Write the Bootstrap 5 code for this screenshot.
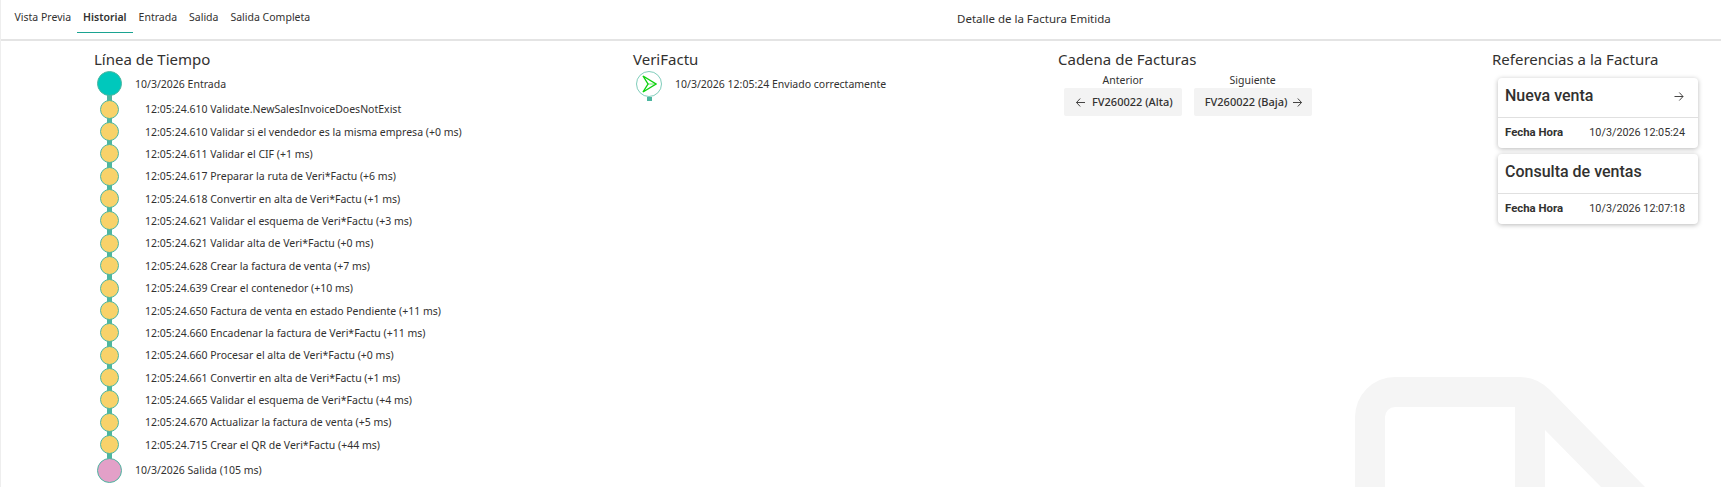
<!DOCTYPE html>
<html lang="es">
<head>
<meta charset="utf-8">
<title>Detalle de la Factura Emitida</title>
<link href="https://cdn.jsdelivr.net/npm/bootstrap@5.3.0/dist/css/bootstrap.min.css" rel="stylesheet">
<style>
html,body{height:100%;}
body{font-family:"Noto Sans","Open Sans",sans-serif;font-size:10.5px;color:#323130;background:#fff;overflow:hidden;position:relative;border-left:1px solid #eee;}
.wmark{position:absolute;left:-1px;top:0;width:1721px;height:487px;z-index:0;}
.topbar{height:41px;border-bottom:2px solid #e4e4e4;position:relative;z-index:1;}
.tabset{width:1034px;padding-left:7.5px;}
.tabitem{height:33px;padding:3px 6px 0;color:#323130;text-decoration:none;display:flex;align-items:center;}
.tabitem.on{font-weight:600;border-bottom:1px solid #1aa391;}
.toptitle{margin-left:-78px;font-size:11.5px;height:37px;}
.mainrow{position:relative;z-index:1;padding-top:8px;}
.cola{width:632px;padding-left:93px;}
.colb{width:425px;}
.colc{width:434px;}
.cold{width:229px;}
.sect{font-size:15px;line-height:20px;font-weight:400;margin:0;color:#323130;}
.tlrow{position:relative;height:22.37px;}
.tlrow::before{content:"";position:absolute;left:13px;top:-6px;width:5px;height:34px;background:#4db6a0;z-index:0;}
.dot{position:relative;z-index:1;width:19px;height:19px;border-radius:50%;background:#f8d26a;border:1px solid #4db6a0;margin-left:6px;flex:none;}
.tltext{margin-left:26px;padding-top:2px;white-space:nowrap;}
.tlbig{height:29px;}
.tlbig::before{display:none;}
.tlend::before{display:block;top:-6px;height:12px;}
.dotbig{position:relative;z-index:1;width:25px;height:25px;border-radius:50%;background:#00c8bc;border:1px solid #4db6a0;margin-left:3px;flex:none;}
.dotend{background:#e3a0c8;}
.tlbig .tltext{margin-left:13px;}
.sendrow{height:26px;margin-top:2px;}
.sendicon{position:relative;width:26px;height:26px;border-radius:50%;border:1px solid #7fcdbb;flex:none;display:flex;align-items:center;justify-content:center;margin-left:3px;}
.sendicon::after{content:"";position:absolute;left:10px;top:25px;width:5px;height:4px;background:#4db6a0;}
.sendtext{margin-left:13px;padding-top:2px;}
.chain{margin-left:6px;margin-top:4px;gap:12px;}
.chainlabel{line-height:15px;}
.chainbtn{height:28px;background:#f3f3f3;border:0;border-radius:2px;font-size:11px;font-weight:500;color:#323130;display:flex;align-items:center;white-space:nowrap;}
.chainprev{padding:0 9px 0 12px;gap:7px;}
.chainnext{padding:0 10px 0 11px;gap:5px;}
.refcard{width:200px;margin-left:6px;border:0;border-radius:4px;box-shadow:0 1px 5px rgba(0,0,0,.28);margin-bottom:6px;font-family:Roboto,sans-serif;}
.refhead{height:40px;border-bottom:1px solid #e0e0e0;padding:9px 7px 0;display:flex;justify-content:space-between;align-items:flex-start;}
.refname{font-size:16px;font-weight:500;line-height:18px;color:#323130;}
.refarrow{margin:5px 7px 0 0;}
.refbody{height:30px;padding:0 13px 0 7px;display:flex;justify-content:space-between;align-items:center;font-size:10.8px;}
.refbody b{font-weight:700;font-size:11.4px;}
.sectgap{margin-bottom:9px;}
</style>
</head>
<body>
<svg class="wmark" viewBox="0 0 1721 487" aria-hidden="true"><path fill="#f5f5f5" d="M1355 487V417a40 40 0 0 1 40-40H1520q17 0 30 13L1645 487H1601L1545 430V487H1515V407H1395a10 10 0 0 0-10 10V487Z"/></svg>
<header class="topbar d-flex align-items-start">
  <nav class="tabset d-flex">
    <a class="tabitem" href="#">Vista Previa</a>
    <a class="tabitem on" href="#">Historial</a>
    <a class="tabitem" href="#">Entrada</a>
    <a class="tabitem" href="#">Salida</a>
    <a class="tabitem" href="#">Salida Completa</a>
  </nav>
  <div class="toptitle d-flex align-items-center">Detalle de la Factura Emitida</div>
</header>
<main class="mainrow d-flex">
  <section class="cola">
    <h2 class="sect">Línea de Tiempo</h2>
    <div class="tlrow tlbig d-flex align-items-center"><span class="dotbig"></span><span class="tltext">10/3/2026 Entrada</span></div>
    <div class="tlrow d-flex align-items-center"><span class="dot"></span><span class="tltext">12:05:24.610 Validate.NewSalesInvoiceDoesNotExist</span></div>
    <div class="tlrow d-flex align-items-center"><span class="dot"></span><span class="tltext">12:05:24.610 Validar si el vendedor es la misma empresa (+0 ms)</span></div>
    <div class="tlrow d-flex align-items-center"><span class="dot"></span><span class="tltext">12:05:24.611 Validar el CIF (+1 ms)</span></div>
    <div class="tlrow d-flex align-items-center"><span class="dot"></span><span class="tltext">12:05:24.617 Preparar la ruta de Veri*Factu (+6 ms)</span></div>
    <div class="tlrow d-flex align-items-center"><span class="dot"></span><span class="tltext">12:05:24.618 Convertir en alta de Veri*Factu (+1 ms)</span></div>
    <div class="tlrow d-flex align-items-center"><span class="dot"></span><span class="tltext">12:05:24.621 Validar el esquema de Veri*Factu (+3 ms)</span></div>
    <div class="tlrow d-flex align-items-center"><span class="dot"></span><span class="tltext">12:05:24.621 Validar alta de Veri*Factu (+0 ms)</span></div>
    <div class="tlrow d-flex align-items-center"><span class="dot"></span><span class="tltext">12:05:24.628 Crear la factura de venta (+7 ms)</span></div>
    <div class="tlrow d-flex align-items-center"><span class="dot"></span><span class="tltext">12:05:24.639 Crear el contenedor (+10 ms)</span></div>
    <div class="tlrow d-flex align-items-center"><span class="dot"></span><span class="tltext">12:05:24.650 Factura de venta en estado Pendiente (+11 ms)</span></div>
    <div class="tlrow d-flex align-items-center"><span class="dot"></span><span class="tltext">12:05:24.660 Encadenar la factura de Veri*Factu (+11 ms)</span></div>
    <div class="tlrow d-flex align-items-center"><span class="dot"></span><span class="tltext">12:05:24.660 Procesar el alta de Veri*Factu (+0 ms)</span></div>
    <div class="tlrow d-flex align-items-center"><span class="dot"></span><span class="tltext">12:05:24.661 Convertir en alta de Veri*Factu (+1 ms)</span></div>
    <div class="tlrow d-flex align-items-center"><span class="dot"></span><span class="tltext">12:05:24.665 Validar el esquema de Veri*Factu (+4 ms)</span></div>
    <div class="tlrow d-flex align-items-center"><span class="dot"></span><span class="tltext">12:05:24.670 Actualizar la factura de venta (+5 ms)</span></div>
    <div class="tlrow d-flex align-items-center"><span class="dot"></span><span class="tltext">12:05:24.715 Crear el QR de Veri*Factu (+44 ms)</span></div>
    <div class="tlrow tlbig tlend d-flex align-items-center"><span class="dotbig dotend"></span><span class="tltext">10/3/2026 Salida (105 ms)</span></div>
  </section>
  <section class="colb">
    <h2 class="sect">VeriFactu</h2>
    <div class="sendrow d-flex align-items-center">
      <span class="sendicon"><svg width="15" height="18" viewBox="0 0 15 18" aria-hidden="true"><path fill="none" stroke="#0fd10f" stroke-width="1.4" d="M1 1 14 9 1 17 6 9Z"/><path fill="none" stroke="#0fd10f" stroke-width=".6" d="M6 9H14"/></svg></span>
      <span class="sendtext">10/3/2026 12:05:24 Enviado correctamente</span>
    </div>
  </section>
  <section class="colc">
    <h2 class="sect">Cadena de Facturas</h2>
    <div class="chain d-flex">
      <div class="text-center">
        <div class="chainlabel">Anterior</div>
        <button class="chainbtn chainprev" type="button"><svg width="9" height="9" viewBox="0 0 9 9" aria-hidden="true"><path fill="none" stroke="#323130" stroke-width=".9" d="M4.2.5.5 4.5 4.2 8.5M.5 4.5H9"/></svg>FV260022 (Alta)</button>
      </div>
      <div class="text-center">
        <div class="chainlabel">Siguiente</div>
        <button class="chainbtn chainnext" type="button">FV260022 (Baja)<svg width="9" height="9" viewBox="0 0 9 9" aria-hidden="true"><path fill="none" stroke="#323130" stroke-width=".9" d="M4.8.5 8.5 4.5 4.8 8.5M8.5 4.5H0"/></svg></button>
      </div>
    </div>
  </section>
  <section class="cold">
    <h2 class="sect sectgap">Referencias a la Factura</h2>
    <div class="card refcard">
      <div class="refhead"><span class="refname">Nueva venta</span><svg class="refarrow" width="10" height="9" viewBox="0 0 9 9" aria-hidden="true"><path fill="none" stroke="#323130" stroke-width=".9" d="M4.8.5 8.5 4.5 4.8 8.5M8.5 4.5H0"/></svg></div>
      <div class="refbody"><b>Fecha Hora</b><span>10/3/2026 12:05:24</span></div>
    </div>
    <div class="card refcard">
      <div class="refhead"><span class="refname">Consulta de ventas</span></div>
      <div class="refbody"><b>Fecha Hora</b><span>10/3/2026 12:07:18</span></div>
    </div>
  </section>
</main>
<script src="https://cdn.jsdelivr.net/npm/bootstrap@5.3.0/dist/js/bootstrap.bundle.min.js"></script>
</body>
</html>
